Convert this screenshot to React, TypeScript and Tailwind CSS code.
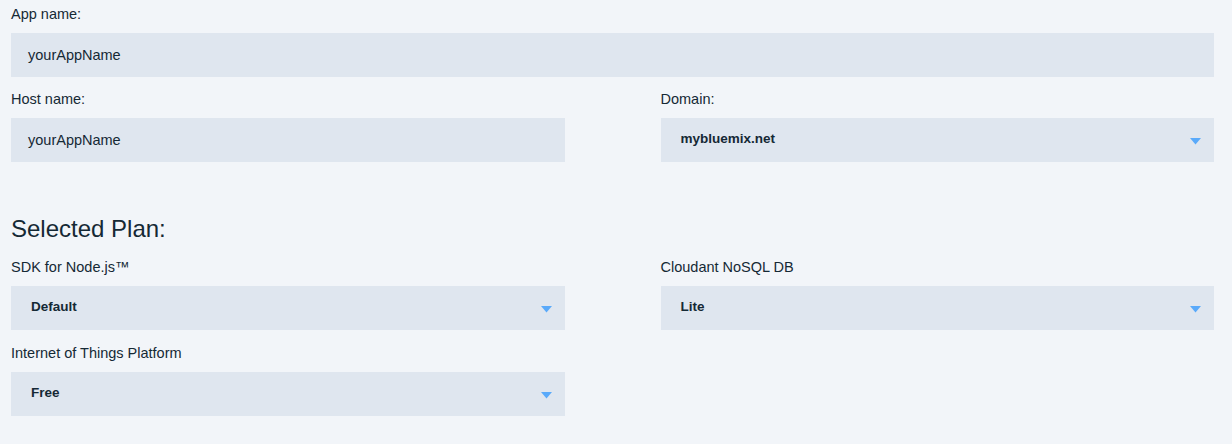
import React from "react";

const font = { fontFamily: '"Liberation Sans", Arial, Helvetica, sans-serif' };

function Arrow() {
  return (
    <svg width="11" height="7" viewBox="0 0 11 7" className="absolute right-[13px] top-1/2 -translate-y-[2px]">
      <polygon points="0,0 11,0 5.5,6.5" fill="#5aaafa" />
    </svg>
  );
}

function Label({ children }: { children: React.ReactNode }) {
  return <div className="text-[14.5px] leading-[20px] text-[#152935] mb-[9px]">{children}</div>;
}

function Input({ value }: { value: string }) {
  return (
    <div className="h-[44px] bg-[#dfe6ef] flex items-center pl-[17px] pt-[2px] text-[14.5px] text-[#152935]">
      {value}
    </div>
  );
}

function Select({ value }: { value: string }) {
  return (
    <div className="relative h-[44px] bg-[#dfe6ef] flex items-center pl-[20px] pb-[2px] text-[13.5px] font-bold text-[#152935]">
      {value}
      <Arrow />
    </div>
  );
}

export default function App() {
  return (
    <div className="h-[444px] w-full bg-[#f2f5f9] pl-[11px] pr-[18px] pt-[4px]" style={font}>
      <div>
        <Label>App name:</Label>
        <Input value="yourAppName" />
      </div>
      <div className="grid grid-cols-2 gap-x-[96px] mt-[12px]">
        <div>
          <Label>Host name:</Label>
          <Input value="yourAppName" />
        </div>
        <div>
          <Label>Domain:</Label>
          <Select value="mybluemix.net" />
        </div>
      </div>
      <h2 className="mt-[51px] text-[24px] leading-[32px] font-normal text-[#152935]">Selected Plan:</h2>
      <div className="grid grid-cols-2 gap-x-[96px] mt-[12px]">
        <div>
          <Label>SDK for Node.js™</Label>
          <Select value="Default" />
        </div>
        <div>
          <Label>Cloudant NoSQL DB</Label>
          <Select value="Lite" />
        </div>
        <div className="mt-[13px]">
          <Label>Internet of Things Platform</Label>
          <Select value="Free" />
        </div>
      </div>
    </div>
  );
}
